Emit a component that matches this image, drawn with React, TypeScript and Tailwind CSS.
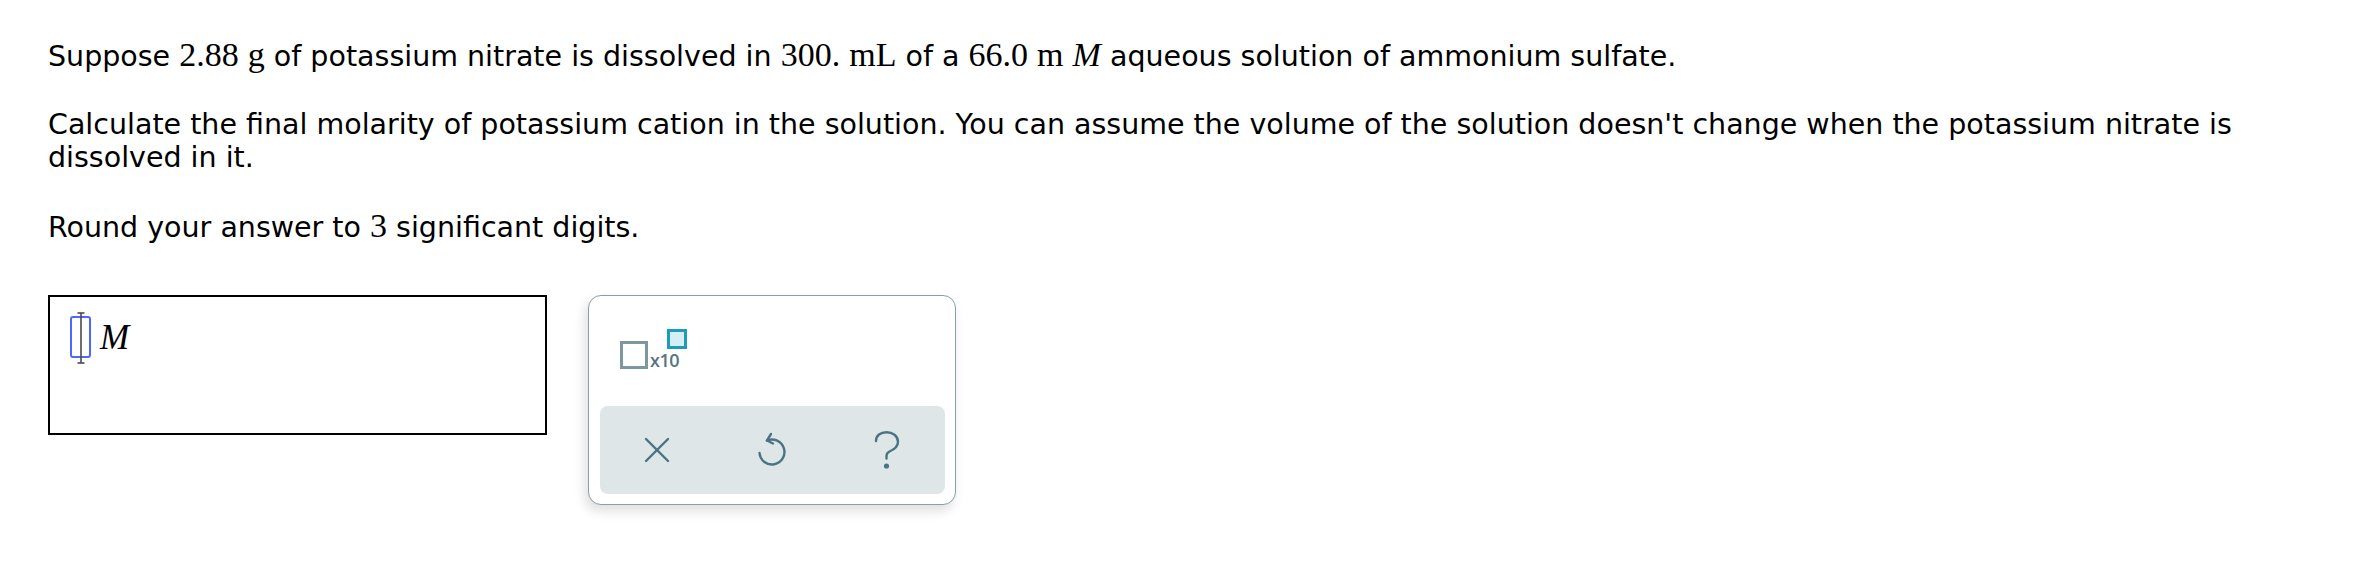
import React from 'react';

const Mx: React.FC<{ children: React.ReactNode; italic?: boolean }> = ({ children, italic }) => (
  <span className={`font-['Liberation_Serif',serif] text-[34px] ${italic ? 'italic' : ''}`}>{children}</span>
);

const XIcon = () => (
  <svg width="26" height="26" viewBox="0 0 26 26" fill="none" stroke="#4b7483" strokeWidth="2.4" strokeLinecap="round">
    <line x1="2" y1="2" x2="24" y2="24" />
    <line x1="24" y1="2" x2="2" y2="24" />
  </svg>
);

const UndoIcon = () => (
  <svg width="28" height="35" viewBox="0 0 28 35" fill="none" stroke="#4b7483" strokeWidth="2.4" strokeLinecap="round" strokeLinejoin="round">
    <path d="M9 8.5 A12.5 12.5 0 1 1 1.5 21" />
    <path d="M9 8.5 L13 2" />
    <path d="M9 8.5 L15 11.5" />
  </svg>
);

const HelpIcon = () => (
  <svg width="26" height="38" viewBox="0 0 26 38" fill="none" stroke="#4b7483" strokeWidth="2.4" strokeLinecap="round">
    <path d="M2 10 C2 4.5 6.5 1.2 12.5 1.2 C18.5 1.2 24 4.8 24 10.8 C24 16.5 19.5 18.8 15.5 20.5 C13.5 21.5 12.5 23 12.5 25 L12.5 27.5" />
    <circle cx="12.5" cy="35" r="1.4" fill="#4b7483" />
  </svg>
);

const App: React.FC = () => {
  return (
    <div className="min-h-screen bg-white px-[48px] pt-[38px] font-['DejaVu_Sans',sans-serif] text-[28.5px] leading-[33px] text-black">
      <p className="mb-[35px]">
        Suppose <Mx>2.88</Mx> <Mx>g</Mx> of potassium nitrate is dissolved in <Mx>300.</Mx> <Mx>mL</Mx> of a{' '}
        <Mx>66.0</Mx> <Mx>m</Mx> <Mx italic>M</Mx> aqueous solution of ammonium sulfate.
      </p>
      <p className="mb-[35px]">
        Calculate the final molarity of potassium cation in the solution. You can assume the volume of the solution
        doesn't change when the potassium nitrate is dissolved in it.
      </p>
      <p>
        Round your answer to <Mx>3</Mx> significant digits.
      </p>

      <div className="mt-[51px] flex items-start gap-[41px]">
        {/* answer box */}
        <div className="h-[140px] w-[499px] border-[2.5px] border-black pl-[20px] pt-[19px]">
          <div className="flex items-center">
            <div className="relative h-[42px] w-[21px] rounded-[3px] border-2 border-[#4f66ff]">
              <svg className="absolute left-[2px] top-[-6px]" width="14" height="52" viewBox="0 0 14 52" fill="none" stroke="#4a4a4a" strokeWidth="1.6">
                <line x1="7" y1="1" x2="7" y2="51" />
                <line x1="3.5" y1="1" x2="10.5" y2="1" />
                <line x1="3.5" y1="51" x2="10.5" y2="51" />
              </svg>
            </div>
            <span className="ml-[9px] font-['Liberation_Serif',serif] text-[35px] italic leading-none">M</span>
          </div>
        </div>

        {/* tools panel */}
        <div className="flex h-[210px] w-[368px] flex-col rounded-[13px] border-[1.5px] border-[#85a0a7] bg-white p-[10.5px] shadow-[-3px_6px_12px_rgba(0,0,0,0.13)]">
          <div className="flex-1 pl-[20.5px] pt-[22px]">
            <div className="flex items-start">
              <div className="mt-[12.5px] h-[28px] w-[28px] border-[3px] border-[#7b989f]" />
              <div className="relative">
                <span className="mt-[22px] ml-[2px] block font-['Open_Sans',sans-serif] text-[18px] font-semibold leading-none tracking-[-0.5px] text-[#56747f]">
                  x10
                </span>
                <div className="absolute left-[19px] top-0 h-[20px] w-[20px] border-[3px] border-[#1c9cb7] bg-[#d3eff4]" />
              </div>
            </div>
          </div>
          <div className="grid h-[88px] grid-cols-3 items-center rounded-[8px] bg-[#dfe6e8]">
            <div className="flex justify-center">
              <XIcon />
            </div>
            <div className="flex justify-center">
              <UndoIcon />
            </div>
            <div className="flex justify-center">
              <HelpIcon />
            </div>
          </div>
        </div>
      </div>
    </div>
  );
};

export default App;
